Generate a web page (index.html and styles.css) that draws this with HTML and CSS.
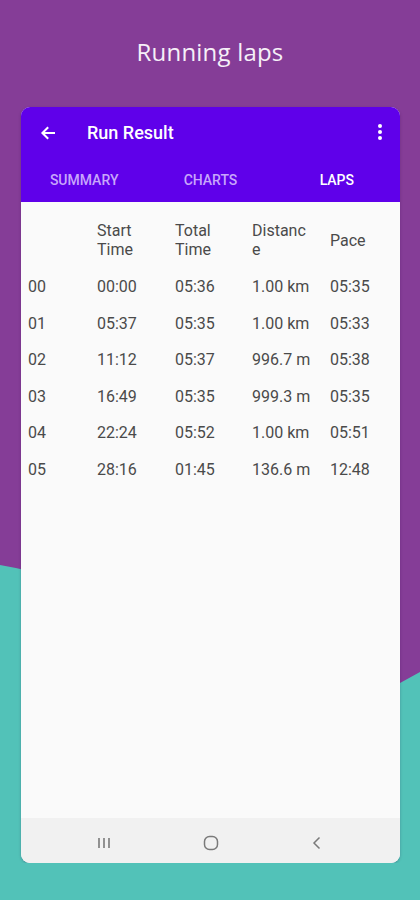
FILE: index.html
```html
<!DOCTYPE html>
<html lang="en">
<head>
    <meta charset="utf-8" />
    <title>Running laps</title>
    <link rel="stylesheet" href="styles.css">
</head>
<body>
    <svg class="backdrop" width="420" height="900" viewBox="0 0 420 900">
        <path d="M0,565 C150,590 330,715 400,683 L420,672 L420,900 L0,900 Z" fill="#52c2b8" />
    </svg>

    <div class="page">
        <h1 class="caption">Running laps</h1>

        <div class="phone">
            <div class="appbar">
                <div class="toolbar">
                    <svg class="icon-back" width="16" height="16" viewBox="0 0 16 16">
                        <path d="M15 8H2.5M8.2 2.2L2.4 8l5.8 5.8" fill="none" stroke="#fff" stroke-width="2" />
                    </svg>
                    <span class="toolbar-title">Run Result</span>
                    <svg class="icon-more" width="6" height="18" viewBox="0 0 6 18">
                        <circle cx="3" cy="3" r="2" fill="#fff" />
                        <circle cx="3" cy="9" r="2" fill="#fff" />
                        <circle cx="3" cy="15" r="2" fill="#fff" />
                    </svg>
                </div>
                <div class="tabs">
                    <div class="tab">Summary</div>
                    <div class="tab">Charts</div>
                    <div class="tab active">Laps</div>
                </div>
            </div>

            <div class="content">
                <div class="laps head">
                    <span></span>
                    <span>Start Time</span>
                    <span>Total Time</span>
                    <span class="narrow">Distance</span>
                    <span class="middle">Pace</span>
                </div>
                <div class="laps row"><span>00</span><span>00:00</span><span>05:36</span><span>1.00 km</span><span>05:35</span></div>
                <div class="laps row"><span>01</span><span>05:37</span><span>05:35</span><span>1.00 km</span><span>05:33</span></div>
                <div class="laps row"><span>02</span><span>11:12</span><span>05:37</span><span>996.7 m</span><span>05:38</span></div>
                <div class="laps row"><span>03</span><span>16:49</span><span>05:35</span><span>999.3 m</span><span>05:35</span></div>
                <div class="laps row"><span>04</span><span>22:24</span><span>05:52</span><span>1.00 km</span><span>05:51</span></div>
                <div class="laps row"><span>05</span><span>28:16</span><span>01:45</span><span>136.6 m</span><span>12:48</span></div>
            </div>

            <div class="navbar">
                <svg width="16" height="12" viewBox="0 0 16 12">
                    <path d="M3 1v10M8 1v10M13 1v10" stroke="#7a7a7a" stroke-width="1.6" />
                </svg>
                <svg width="16" height="16" viewBox="0 0 16 16">
                    <rect x="1.5" y="1.5" width="13" height="13" rx="5" fill="none" stroke="#7a7a7a" stroke-width="1.5" />
                </svg>
                <svg width="16" height="14" viewBox="0 0 16 14">
                    <path d="M10.5 1.5L5 7l5.5 5.5" fill="none" stroke="#7a7a7a" stroke-width="1.5" />
                </svg>
            </div>
        </div>
    </div>
</body>
</html>
```

FILE: styles.css
```css
body {
    margin: 0px;
    padding: 0px;
    background-color: #853d97;
    font-family: Roboto, "Liberation Sans", sans-serif;
    overflow: hidden;
}

.backdrop {
    position: absolute;
    left: 0px;
    top: 0px;
    z-index: 0;
}

.page {
    position: relative;
    z-index: 1;
    display: flex;
    flex-direction: column;
    align-items: center;
}

.caption {
    margin: 0px;
    padding-top: 35px;
    height: 72px;
    line-height: 34px;
    font-family: "Open Sans", sans-serif;
    font-weight: 500;
    font-size: 24px;
    color: #f6f0f8;
    letter-spacing: 0.2px;
}

.phone {
    width: 379px;
    height: 756px;
    margin-left: 1px;
    border-radius: 9px;
    overflow: hidden;
    background-color: #fafafa;
    display: flex;
    flex-direction: column;
    box-shadow: 0px 1px 3px rgba(40, 0, 60, 0.25);
}

.appbar {
    background-color: #5f00ea;
    color: #fff;
}

.toolbar {
    height: 52px;
    display: flex;
    align-items: center;
    padding: 0px 17px 0px 19px;
}

.icon-back {
    margin-top: -1px;
}

.toolbar-title {
    flex: 1;
    margin-left: 31px;
    font-size: 18px;
    font-weight: 500;
    margin-top: -1px;
}

.icon-more {
    margin-top: -3px;
}

.tabs {
    height: 43px;
    display: flex;
}

.tab {
    flex: 1;
    display: flex;
    align-items: center;
    justify-content: center;
    font-size: 14px;
    font-weight: 500;
    text-transform: uppercase;
    color: #c8a6fb;
    padding-bottom: 1px;
}

    .tab.active {
        color: #fff;
    }

.content {
    flex: 1;
    padding: 19px 0px 0px 7px;
    color: #4a4a4a;
    font-size: 16px;
}

.laps {
    display: grid;
    grid-template-columns: 69px 78px 77px 78px auto;
}

.head {
    line-height: 19px;
    margin-bottom: 10px;
}

    .head span {
        padding-right: 18px;
    }

    .head .narrow {
        width: 56px;
        padding-right: 0px;
        word-break: break-all;
    }

    .head .middle {
        align-self: center;
    }

.row {
    line-height: 36.5px;
}

.navbar {
    height: 45px;
    background-color: #f1f1f1;
    display: flex;
    align-items: center;
    justify-content: space-between;
    padding: 4px 75px 0px 75px;
    box-sizing: border-box;
}
```
